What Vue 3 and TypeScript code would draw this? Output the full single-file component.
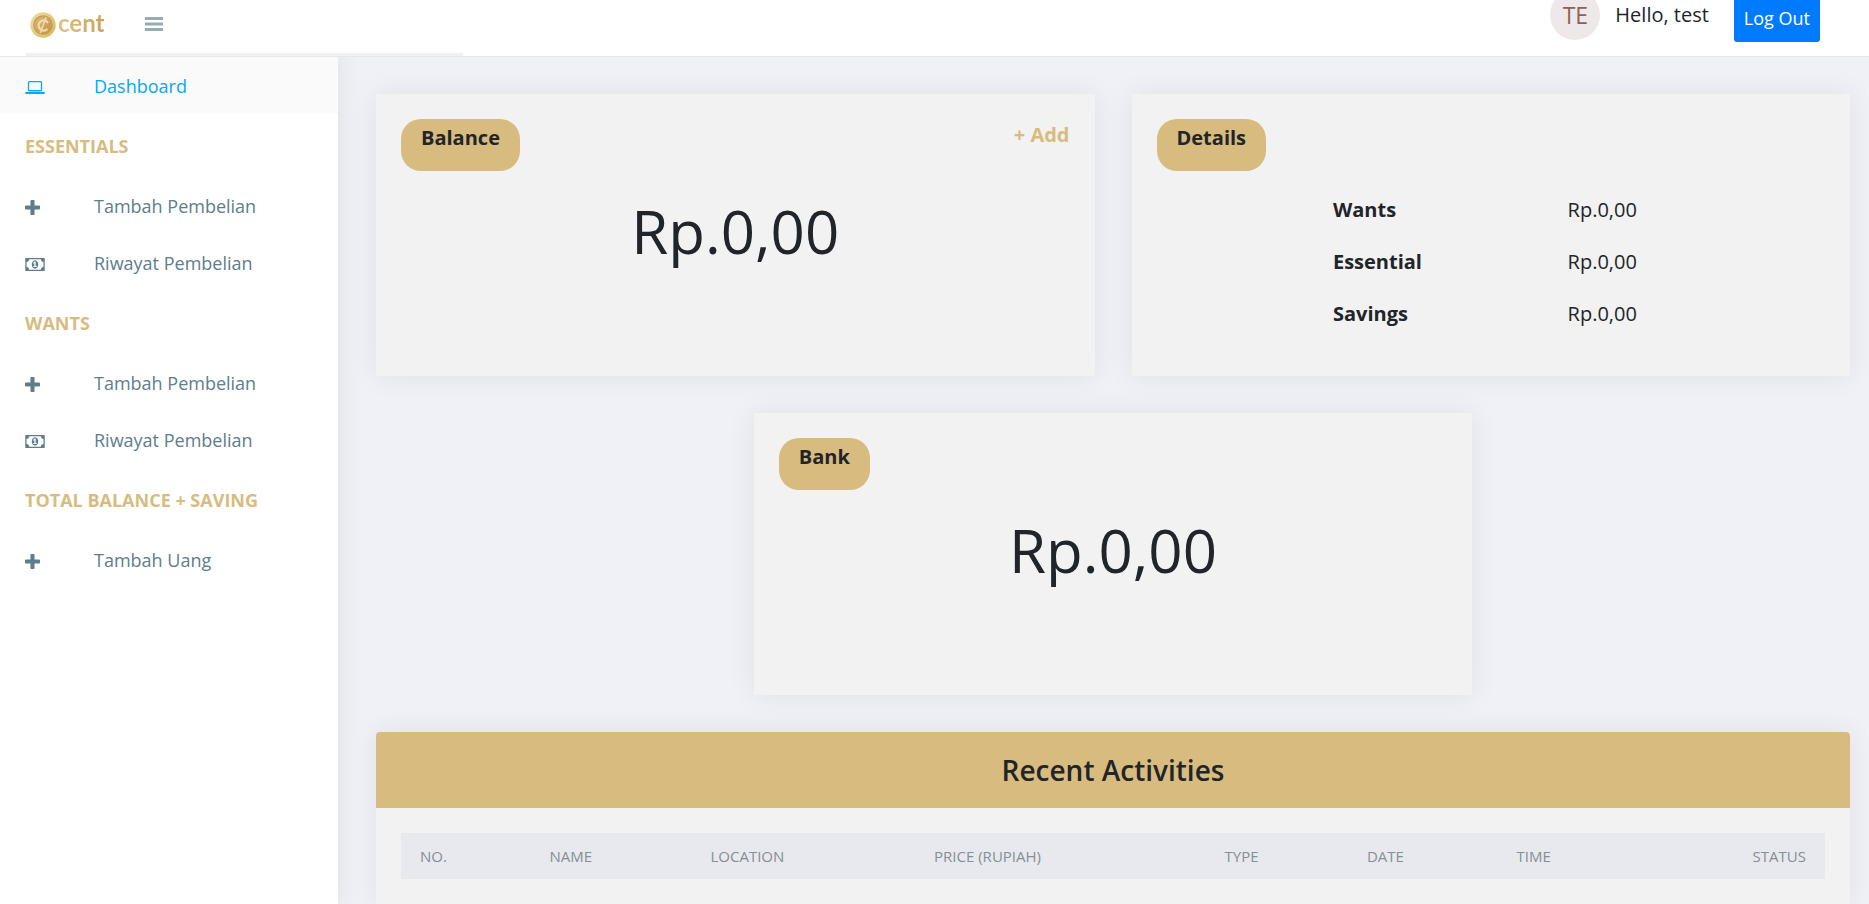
<script setup lang="ts">
interface NavEntry {
  kind: 'link' | 'heading'
  label: string
  icon?: 'laptop' | 'plus' | 'money'
  active?: boolean
}

interface Detail {
  name: string
  amount: string
}

const nav: NavEntry[] = [
  { kind: 'link', label: 'Dashboard', icon: 'laptop', active: true },
  { kind: 'heading', label: 'ESSENTIALS' },
  { kind: 'link', label: 'Tambah Pembelian', icon: 'plus' },
  { kind: 'link', label: 'Riwayat Pembelian', icon: 'money' },
  { kind: 'heading', label: 'WANTS' },
  { kind: 'link', label: 'Tambah Pembelian', icon: 'plus' },
  { kind: 'link', label: 'Riwayat Pembelian', icon: 'money' },
  { kind: 'heading', label: 'TOTAL BALANCE + SAVING' },
  { kind: 'link', label: 'Tambah Uang', icon: 'plus' },
]

const details: Detail[] = [
  { name: 'Wants', amount: 'Rp.0,00' },
  { name: 'Essential', amount: 'Rp.0,00' },
  { name: 'Savings', amount: 'Rp.0,00' },
]

const columns: string[] = ['NO.', 'NAME', 'LOCATION', 'PRICE (RUPIAH)', 'TYPE', 'DATE', 'TIME', 'STATUS']
</script>

<template>
  <div class="shell">
    <header class="topbar">
      <div class="topbar-row">
        <a class="brand" href="#">
          <svg class="coin" viewBox="0 0 26 26" aria-hidden="true">
            <defs>
              <linearGradient id="rim" x1="0" y1="0" x2="1" y2="1">
                <stop offset="0" stop-color="#eedfa6" />
                <stop offset="0.5" stop-color="#e2cb80" />
                <stop offset="1" stop-color="#d9b94f" />
              </linearGradient>
              <linearGradient id="face" x1="0" y1="0" x2="1" y2="1">
                <stop offset="0" stop-color="#d9b878" />
                <stop offset="1" stop-color="#c2934d" />
              </linearGradient>
            </defs>
            <circle cx="13" cy="13" r="12.7" fill="url(#rim)" />
            <circle cx="13" cy="13" r="9.8" fill="#c59a55" />
            <circle cx="13.3" cy="13.3" r="8.8" fill="url(#face)" />
            <path d="M17.4 10.2A5 5 0 1 0 16.6 17.6" fill="none" stroke="#eedca4" stroke-width="2.4" stroke-linecap="round" />
            <path d="M15.9 5.8L10.4 20.4" fill="none" stroke="#eedca4" stroke-width="1.6" stroke-linecap="round" />
          </svg>
          <span class="brand-name">cent</span>
        </a>
        <button class="toggle" type="button" aria-label="Menu">
          <svg viewBox="0 0 18 14" aria-hidden="true">
            <rect width="18" height="3" rx="0.5" />
            <rect y="5.5" width="18" height="3" rx="0.5" />
            <rect y="11" width="18" height="3" rx="0.5" />
          </svg>
        </button>
        <div class="user">
          <span class="avatar">TE</span>
          <span class="hello">Hello, test</span>
          <button class="logout" type="button">Log Out</button>
        </div>
      </div>
      <div class="topbar-strip"></div>
    </header>

    <div class="body">
      <nav class="sidebar">
        <template v-for="(entry, i) in nav" :key="i">
          <h2 v-if="entry.kind === 'heading'" class="nav-heading">{{ entry.label }}</h2>
          <a v-else class="nav-link" :class="{ active: entry.active }" href="#">
            <span class="nav-icon">
              <svg v-if="entry.icon === 'laptop'" class="wide" viewBox="0 128 1920 1280" aria-hidden="true">
                <path d="M416 1152q-66 0-113-47t-47-113v-704q0-66 47-113t113-47h1088q66 0 113 47t47 113v704q0 66-47 113t-113 47h-1088zM384 288v704q0 13 9.500 22.500t22.500 9.500h1088q13 0 22.500-9.500t9.500-22.500v-704q0-13-9.500-22.500t-22.500-9.500h-1088q-13 0-22.500 9.500t-9.500 22.500zM1760 1216h160v96q0 40-47 68t-113 28h-1600q-66 0-113-28t-47-68v-96h1760z" />
              </svg>
              <svg v-else-if="entry.icon === 'plus'" class="square" viewBox="0 0 1408 1408" aria-hidden="true">
                <path d="M1408 608v192q0 40-28 68t-68 28h-416v416q0 40-28 68t-68 28h-192q-40 0-68-28t-28-68v-416h-416q-40 0-68-28t-28-68v-192q0-40 28-68t68-28h416v-416q0-40 28-68t68-28h192q40 0 68 28t28 68v416h416q40 0 68 28t28 68z" />
              </svg>
              <svg v-else class="wide" viewBox="0 256 1920 1280" aria-hidden="true">
                <path d="M768 1152h384v-96h-128v-448h-114l-148 137 77 80q42-37 55-57h2v288h-128v96zM1280 896q0 70-21 142t-59.500 134-101.500 101-138 39-138-39-101.500-101-59.500-134-21-142 21-142 59.500-134 101.500-101 138-39 138 39 101.500 101 59.500 134 21 142zM1792 1152v-512q-106 0-181-75t-75-181h-1152q0 106-75 181t-181 75v512q106 0 181 75t75 181h1152q0-106 75-181t181-75zM1920 320v1152q0 26-19 45t-45 19h-1792q-26 0-45-19t-19-45v-1152q0-26 19-45t45-19h1792q26 0 45 19t19 45z" />
              </svg>
            </span>
            <span>{{ entry.label }}</span>
          </a>
        </template>
      </nav>

      <main class="content">
        <div class="cards">
          <section class="card">
            <div class="card-head">
              <h3 class="pill">Balance</h3>
              <a class="add" href="#">+ Add</a>
            </div>
            <p class="amount">Rp.0,00</p>
          </section>

          <section class="card">
            <div class="card-head">
              <h3 class="pill">Details</h3>
            </div>
            <table class="details">
              <tbody>
                <tr v-for="row in details" :key="row.name">
                  <th scope="row">{{ row.name }}</th>
                  <td>{{ row.amount }}</td>
                </tr>
              </tbody>
            </table>
          </section>

          <section class="card">
            <div class="card-head">
              <h3 class="pill">Bank</h3>
            </div>
            <p class="amount">Rp.0,00</p>
          </section>
        </div>

        <section class="recent">
          <h3 class="recent-title">Recent Activities</h3>
          <div class="recent-body">
            <table class="activity">
              <colgroup>
                <col class="c-no" />
                <col class="c-name" />
                <col class="c-location" />
                <col class="c-price" />
                <col class="c-type" />
                <col class="c-date" />
                <col class="c-time" />
                <col />
              </colgroup>
              <thead>
                <tr>
                  <th v-for="column in columns" :key="column" scope="col">{{ column }}</th>
                </tr>
              </thead>
            </table>
          </div>
        </section>
      </main>
    </div>
  </div>
</template>

<style>
body {
  margin: 0;
  background: #f0f1f7;
}
</style>

<style scoped>
.shell {
  display: flex;
  flex-direction: column;
  min-height: 100vh;
  font-family: 'Open Sans', 'Noto Sans', sans-serif;
  font-size: 20px;
  line-height: 30px;
  color: #212529;
}

.shell * {
  box-sizing: border-box;
}

a {
  text-decoration: none;
}

h2,
h3,
p {
  margin: 0;
}

button {
  font: inherit;
  border: 0;
  cursor: pointer;
}

.topbar {
  position: relative;
  z-index: 1;
  overflow: hidden;
  background: #fff;
  border-bottom: 1px solid #e7e7eb;
}

.topbar-row {
  display: flex;
  align-items: flex-start;
  height: 53px;
  padding: 0 49px 0 30px;
}

.topbar-strip {
  width: 437px;
  height: 3px;
  margin-left: 26px;
  background: #f1f1f1;
}

.brand {
  display: flex;
  align-items: center;
  gap: 2px;
  height: 49px;
}

.coin {
  width: 26px;
  height: 26px;
}

.brand-name {
  padding-bottom: 3px;
  font-family: Lato, 'Open Sans', sans-serif;
  font-size: 24px;
  font-weight: 700;
  color: transparent;
  background: linear-gradient(90deg, #dfc189, #cda254);
  background-clip: text;
}

.toggle {
  display: flex;
  align-items: center;
  height: 48px;
  margin-left: 36px;
  padding: 0 5px;
  background: none;
}

.toggle svg {
  width: 18px;
  height: 14px;
  fill: #97abb5;
}

.user {
  display: flex;
  align-items: center;
  height: 50px;
  margin-top: -10px;
  margin-left: auto;
}

.avatar {
  display: flex;
  align-items: center;
  justify-content: center;
  width: 50px;
  height: 50px;
  border-radius: 50%;
  font-size: 23px;
  color: #8d6060;
  background: #efe8e8;
}

.hello {
  margin: 0 25px 0 15px;
}

.logout {
  height: 54px;
  padding: 8px 10px 2px;
  border-radius: 3px;
  font-size: 18px;
  color: #fff;
  background: #007bff;
}

.body {
  display: flex;
  flex: 1;
}

.sidebar {
  flex: 0 0 338px;
  background: #fff;
  box-shadow: 1px 0 25px rgba(0, 0, 0, 0.08);
}

.nav-link,
.nav-heading {
  display: flex;
  align-items: center;
  padding: 0 25px;
  font-size: 18px;
}

.nav-link {
  height: 57px;
  color: #607d8b;
}

.nav-link.active {
  color: #03a9f3;
  background: #fafafa;
}

.nav-heading {
  height: 63px;
  font-weight: 700;
  color: #d8bb7f;
}

.nav-icon {
  display: flex;
  width: 69px;
  padding-top: 3px;
}

.nav-icon svg {
  fill: currentColor;
}

.wide {
  width: 20px;
  height: 13px;
}

.square {
  width: 15px;
  height: 15px;
}

.content {
  display: flex;
  flex: 1;
  flex-direction: column;
  gap: 37px;
  min-width: 0;
  padding: 37px 19px 0 38px;
}

.cards {
  display: flex;
  flex-wrap: wrap;
  justify-content: center;
  gap: 37px;
}

.card {
  flex: 0 0 calc((100% - 37px) / 2);
  min-height: 282px;
  padding: 25px;
  background: #f2f2f2;
  box-shadow: 0 0 28px rgba(0, 0, 0, 0.07);
}

.card-head {
  display: flex;
  align-items: flex-start;
  justify-content: space-between;
}

.pill {
  padding: 4px 20px 18px;
  border-radius: 20px;
  font-size: 20px;
  font-weight: 700;
  background: #d8bb7f;
}

.add {
  font-weight: 700;
  line-height: 32px;
  color: #d8bb7f;
}

.amount {
  margin-top: 24px;
  font-size: 60px;
  line-height: 72px;
  text-align: center;
}

.details {
  width: 52%;
  margin: 13px auto 0;
  border-collapse: collapse;
  table-layout: fixed;
}

.details th,
.details td {
  height: 52px;
  padding: 0 0 0 16px;
  text-align: left;
}

.details th {
  width: 67.5%;
  font-weight: 700;
}

.recent {
  flex: 1;
  border-radius: 4px 4px 0 0;
  background: #f2f2f2;
  box-shadow: 0 0 28px rgba(0, 0, 0, 0.07);
}

.recent-title {
  padding: 23px 25px;
  border-radius: 4px 4px 0 0;
  font-size: 28px;
  font-weight: 600;
  text-align: center;
  background: #d8bb7f;
}

.recent-body {
  padding: 25px 25px 20px;
}

.activity {
  width: 100%;
  border-collapse: collapse;
  table-layout: fixed;
  font-size: 15px;
  color: #868e96;
  background: #e8e9ee;
}

.activity th {
  height: 46px;
  padding: 0 19px;
  font-weight: 400;
  text-align: left;
  white-space: nowrap;
}

.activity th:last-child {
  text-align: right;
}

.c-no {
  width: 9.1%;
}

.c-name {
  width: 11.3%;
}

.c-location {
  width: 15.7%;
}

.c-price {
  width: 20.4%;
}

.c-type {
  width: 10%;
}

.c-date {
  width: 10.5%;
}

.c-time {
  width: 12%;
}
</style>
